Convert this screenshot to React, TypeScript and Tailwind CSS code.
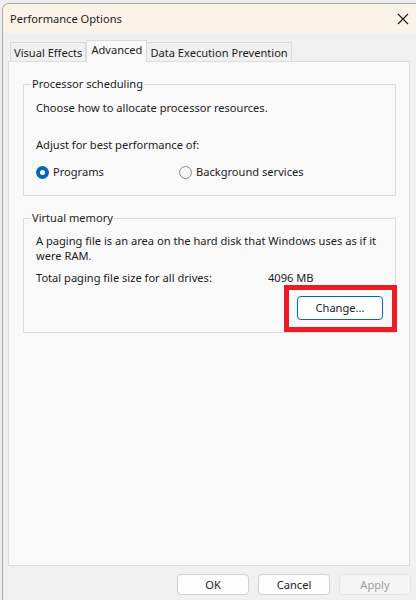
import React from "react";

const font = { fontFamily: '"Noto Sans", "Open Sans", sans-serif' };

function Radio({ checked }: { checked?: boolean }) {
  return checked ? (
    <span className="w-[13px] h-[13px] rounded-full bg-[#0067c0] flex items-center justify-center shrink-0">
      <span className="w-[5px] h-[5px] rounded-full bg-white" />
    </span>
  ) : (
    <span className="w-[13px] h-[13px] rounded-full border border-[#8a8a8a] bg-[#f6f6f6] shrink-0" />
  );
}

export default function App() {
  return (
    <div
      className="w-[416px] h-[600px] overflow-hidden bg-[#eeeeee] pt-[3px] pl-[2px] text-[11.1px] leading-[16px] text-[#1b1b1b]"
      style={font}
    >
      <div className="w-[414px] h-[597px] flex flex-col border-l border-t border-[#a8a8a8] rounded-tl-[7px] overflow-hidden bg-[#f0f0f0]">
        {/* title bar */}
        <div className="h-[29px] shrink-0 bg-[#faf3e8] flex items-center justify-between pl-[7px] pr-[6px]">
          <span>Performance Options</span>
          <svg width="12" height="12" viewBox="0 0 12 12" className="mr-[1px]">
            <path d="M1 1 L11 11 M11 1 L1 11" stroke="#1b1b1b" strokeWidth="1.1" fill="none" />
          </svg>
        </div>

        {/* tabs */}
        <div className="flex items-end h-[22px] mt-[7px] pl-[7px] shrink-0">
          <div className="h-[20px] px-[3px] border border-b-0 border-[#dadada] bg-[#f0f0f0] flex items-center">
            Visual Effects
          </div>
          <div className="relative z-10 h-[22px] px-[4px] border border-b-0 border-[#dadada] bg-[#f9f9f9] flex items-start pt-[1px]">
            Advanced
          </div>
          <div className="h-[20px] px-[3px] border border-b-0 border-l-0 border-[#dadada] bg-[#f0f0f0] flex items-center">
            Data Execution Prevention
          </div>
        </div>

        {/* panel */}
        <div className="-mt-px ml-[5px] w-[402px] h-[505px] shrink-0 border border-[#dcdcdc] bg-[#f9f9f9] pt-[14px] pl-[14px]">
          <fieldset className="w-[373px] border border-[#dcdcdc]">
            <legend className="ml-[7px] px-[1px]">Processor scheduling</legend>
            <div className="pl-[12px] pb-[15px]">
              <div className="mt-[8px]">Choose how to allocate processor resources.</div>
              <div className="mt-[21px]">Adjust for best performance of:</div>
              <div className="mt-[11px] flex items-center">
                <div className="flex items-center gap-[4px] w-[143px]">
                  <Radio checked />
                  <span>Programs</span>
                </div>
                <div className="flex items-center gap-[4px]">
                  <Radio />
                  <span>Background services</span>
                </div>
              </div>
            </div>
          </fieldset>

          <fieldset className="mt-[14px] w-[373px] border border-[#dcdcdc]">
            <legend className="ml-[7px] px-[1px]">Virtual memory</legend>
            <div className="pl-[12px] pr-[12px] pb-[12px]">
              <div className="mt-[7px] leading-[15px]">
                A paging file is an area on the hard disk that Windows uses as if it
                <br />
                were RAM.
              </div>
              <div className="mt-[7px] flex">
                <span className="w-[232px]">Total paging file size for all drives:</span>
                <span>4096 MB</span>
              </div>
              <div className="mt-[10px] flex justify-end">
                <div className="relative">
                  <button className="w-[86px] h-[24px] rounded-[4px] border border-[#0067c0] bg-white text-[#1b1b1b]">
                    Change...
                  </button>
                  <span className="absolute -left-[13px] -top-[11px] -right-[14px] -bottom-[12px] border-[5px] border-[#ed1c24] pointer-events-none" />
                </div>
              </div>
            </div>
          </fieldset>
        </div>

        {/* bottom buttons */}
        <div className="mt-[8px] flex justify-end gap-[9px] pr-[5px]">
          <button className="w-[72px] h-[21px] rounded-[4px] border border-[#d0d0d0] bg-[#fdfdfd] text-[#1b1b1b]">
            OK
          </button>
          <button className="w-[72px] h-[21px] rounded-[4px] border border-[#d0d0d0] bg-[#fdfdfd] text-[#1b1b1b]">
            Cancel
          </button>
          <button className="w-[72px] h-[21px] rounded-[4px] border border-[#e5e5e5] bg-[#f5f5f5] text-[#9d9d9d]">
            Apply
          </button>
        </div>
      </div>
    </div>
  );
}
